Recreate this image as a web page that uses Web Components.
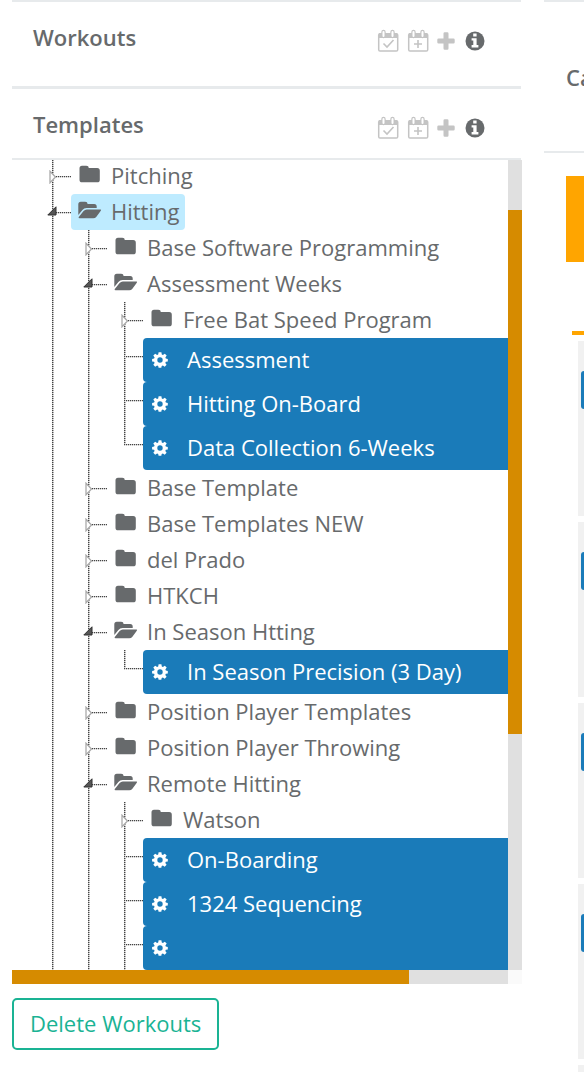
<!DOCTYPE html>
<html lang="en">
<head>
<meta charset="utf-8">
<meta name="viewport" content="width=device-width, initial-scale=1">
<title>Workout templates</title>
<style>
  html { background: #fff; }
  body { margin: 0; font-family: "Open Sans", "Noto Sans", sans-serif; font-size: 22px; line-height: 36px; color: #676a6c; overflow-x: hidden; }
</style>
</head>
<body>
<planner-page>
  <library-panel slot="library">
    <panel-header heading="Workouts"></panel-header>
    <panel-header heading="Templates" compact></panel-header>
    <scroll-frame>
      <tree-folder label="Pitching"></tree-folder>
      <tree-folder label="Hitting" open selected>
        <tree-folder label="Base Software Programming"></tree-folder>
        <tree-folder label="Assessment Weeks" open>
          <tree-folder label="Free Bat Speed Program"></tree-folder>
          <tree-workout label="Assessment"></tree-workout>
          <tree-workout label="Hitting On-Board"></tree-workout>
          <tree-workout label="Data Collection 6-Weeks" last></tree-workout>
        </tree-folder>
        <tree-folder label="Base Template"></tree-folder>
        <tree-folder label="Base Templates NEW"></tree-folder>
        <tree-folder label="del Prado"></tree-folder>
        <tree-folder label="HTKCH"></tree-folder>
        <tree-folder label="In Season Htting" open>
          <tree-workout label="In Season Precision (3 Day)" last></tree-workout>
        </tree-folder>
        <tree-folder label="Position Player Templates"></tree-folder>
        <tree-folder label="Position Player Throwing"></tree-folder>
        <tree-folder label="Remote Hitting" open>
          <tree-folder label="Watson"></tree-folder>
          <tree-workout label="On-Boarding"></tree-workout>
          <tree-workout label="1324 Sequencing"></tree-workout>
          <tree-workout label=""></tree-workout>
        </tree-folder>
      </tree-folder>
    </scroll-frame>
    <outline-button>Delete Workouts</outline-button>
  </library-panel>
  <calendar-panel slot="calendar" heading="Ca"></calendar-panel>
</planner-page>

<script>
const calendarFrame = `<path d="M2 4h18v5H2z" fill="currentColor"/><rect x="1.700" y="4.700" width="19" height="17.400" rx="1.300" fill="none" stroke="currentColor" stroke-width="1.500"/><path d="M6.500 3v4M15.500 3v4" stroke="currentColor" stroke-width="4.400" stroke-linecap="round"/><path d="M6.500 3v4M15.500 3v4" stroke="#fff" stroke-width="2" stroke-linecap="round"/>`;
const icons = {
  calendarCheck: `<svg width="22" height="24" viewBox="0 0 22 24">${calendarFrame}<path d="M6.500 14.500l3.500 3.500 6.500-7" fill="none" stroke="currentColor" stroke-width="1.600"/></svg>`,
  calendarPlus: `<svg width="22" height="24" viewBox="0 0 22 24">${calendarFrame}<path d="M7 15h8M11 11v8" fill="none" stroke="currentColor" stroke-width="1.600"/></svg>`,
  plus: `<svg width="18" height="18" viewBox="0 0 18 18"><path d="M6.500 1.500q0-1.200 1.200-1.200h2.600q1.200 0 1.200 1.200v5h5q1.200 0 1.200 1.200v2.600q0 1.200-1.200 1.200h-5v5q0 1.200-1.200 1.200H7.700q-1.200 0-1.200-1.200v-5h-5Q.3 11.500.3 10.300V7.700q0-1.200 1.200-1.200h5z" fill="currentColor"/></svg>`,
  info: `<svg width="20" height="20" viewBox="0 0 20 20"><circle cx="10" cy="10" r="9.500" fill="currentColor"/><path d="M8.200 2.600h3.400v3H8.200zM6.600 7.200h5v6.800h1.800v2.400H6.600V14h1.700V9.600H6.600z" fill="#fff"/></svg>`,
  folder: `<svg width="21" height="18" viewBox="0 0 21 18"><path d="M.5 3.200Q.5.700 3 .7h4.300q2.500 0 2.500 2.400h8.400q2.600 0 2.600 2.600v9q0 2.600-2.600 2.600H3.100Q.5 17.300.5 14.700z" fill="currentColor"/></svg>`,
  folderOpen: `<svg width="24" height="18" viewBox="0 0 24 18"><path d="M.3 14V3.200Q.3.700 2.800.7h4.300q2.500 0 2.500 2.400h6.600q2.500 0 2.500 2.500V7H8.500Q6 7 4.400 9z" fill="currentColor"/><path d="M.8 16l4.800-6Q7 8.500 8.800 8.500h13.600q1.200 0 .4 1.200l-4.400 6q-1.200 1.600-3.200 1.600H1.600q-1.600 0-.8-1.300z" fill="currentColor"/></svg>`,
  gear: `<svg width="16" height="16" viewBox="0 0 16 16"><path fill="currentColor" fill-rule="evenodd" d="M6.600.3h2.800l.4 2.200 1.100.5 1.900-1.300 1.900 1.900L13.400 5.500l.4 1.100 2 .3v2.500l-2 .4-.5 1.100 1.300 1.900-1.900 1.900-1.800-1.300-1.200.5-.4 1.900H6.600l-.4-1.900-1.100-.5-1.900 1.300-1.900-1.900 1.300-1.900-.5-1.100-2-.4V6.900l2-.3.5-1.100L1.300 3.600l1.900-1.900L5.100 3l1.100-.5zM8 5.300A2.700 2.700 0 1 0 8 10.700 2.700 2.700 0 1 0 8 5.300z"/></svg>`,
  closed: `<svg width="8" height="14" viewBox="0 0 8 14"><path d="M1 1.200v11.600L6.500 7z" fill="#fff" stroke="#aaa" stroke-width="1.300"/></svg>`,
  opened: `<svg width="10" height="10" viewBox="0 0 10 10"><path d="M9 .8v8.200H.8z" fill="#555" stroke="#333" stroke-width="1"/></svg>`
};

function define(name, render) {
  customElements.define(name, class extends HTMLElement {
    constructor() { super(); this.attachShadow({ mode: 'open' }); }
    connectedCallback() { this.shadowRoot.innerHTML = render(this); }
  });
}

const reset = `
  *, *::before, *::after { box-sizing: border-box; }
  svg { display: block; flex: none; }
  button { font: inherit; color: inherit; background: none; border: 0; margin: 0; padding: 0; cursor: pointer; }
`;

/* Dotted connector lines shared by every kind of tree node. */
const branch = `
  :host { display: block; position: relative; padding-left: 19px; }
  :host::before { content: ""; position: absolute; left: 0; top: 0; bottom: 0; width: 2px;
    background:
      repeating-linear-gradient(#444 0 1px, #ccc 1px 2px) 0 0 / 1px 100% no-repeat,
      repeating-linear-gradient(#aaa 0 1px, #eee 1px 2px); }
  :host([last])::before { bottom: auto; height: 19px; }
  .twig { position: absolute; left: 0; top: 18px; width: 19px; height: 2px;
    background:
      repeating-linear-gradient(90deg, #444 0 1px, #ccc 1px 2px) 0 0 / 100% 1px no-repeat,
      repeating-linear-gradient(90deg, #ccc 0 1px, #f4f4f4 1px 2px); }
`;

define('planner-page', () => `<style>${reset}
  :host { display: grid; grid-template-columns: minmax(0, 1fr) 40px; column-gap: 22px; padding-left: 12px; }
  </style><slot name="library"></slot><slot name="calendar"></slot>`);

define('library-panel', () => `<style>${reset}
  :host { display: block; }
  </style><slot></slot>`);

define('panel-header', el => `<style>${reset}
  :host { display: block; margin-right: 1px; border-top: 2px solid #e7eaec; }
  :host([compact]) { border-top-width: 3px; border-bottom: 2px solid #e7eaec; }
  header { display: flex; justify-content: space-between; height: 84px; padding: 17px 36px 0 21px; }
  :host([compact]) header { height: 69px; }
  h2 { margin: 0; font-size: 22px; line-height: 36px; font-weight: 600; }
  .tools { display: flex; align-items: center; height: 44px; color: #c4c4c4; }
  .tools button + button { margin-left: 8px; }
  .tools button.info { margin-left: 10px; color: #676a6c; }
  </style>
  <header><h2>${el.getAttribute('heading')}</h2>
  <div class="tools">
    <button aria-label="Schedule">${icons.calendarCheck}</button>
    <button aria-label="Add to calendar">${icons.calendarPlus}</button>
    <button aria-label="Add">${icons.plus}</button>
    <button class="info" aria-label="Information">${icons.info}</button>
  </div></header>`);

define('scroll-frame', () => `<style>${reset}
  :host { display: grid; grid-template-columns: minmax(0, 1fr) 14px; grid-template-rows: auto 14px; background: #fafafa; }
  .view { overflow: hidden; background: #fff; padding-left: 40px; }
  .list { margin-top: -2px; }
  .bar { display: flex; background: #e0e0e0; }
  .bar i { background: #d68b00; }
  .v { flex-direction: column; padding-top: 50px; }
  .v i { height: 69%; }
  .h i { width: 80%; }
  </style>
  <div class="view"><div class="list" role="tree"><slot></slot></div></div>
  <div class="bar v"><i></i></div>
  <div class="bar h"><i></i></div>`);

define('tree-folder', el => {
  const open = el.hasAttribute('open');
  return `<style>${reset}${branch}
  .toggle { position: absolute; left: -3px; top: 12px; }
  .toggle.open { left: -5px; }
  .row { display: flex; align-items: center; width: max-content; height: 36px; padding: 0 6px 0 7px; border-radius: 4px; }
  :host([selected]) .row { background: #beebff; }
  .icon { width: 33px; height: 22px; }
  .icon.shut { padding-left: 1px; }
  .name { padding-bottom: 2px; white-space: nowrap; }
  .children { margin-left: 17px; }
  </style>
  <span class="twig"></span>
  <button class="toggle ${open ? 'open' : ''}" aria-label="Toggle folder" aria-expanded="${open}">${open ? icons.opened : icons.closed}</button>
  <button class="row"><span class="icon ${open ? '' : 'shut'}">${open ? icons.folderOpen : icons.folder}</span><span class="name">${el.getAttribute('label')}</span></button>
  <div class="children" role="group"><slot></slot></div>`;
});

define('tree-workout', el => `<style>${reset}${branch}
  .row { display: flex; align-items: center; width: 100%; height: 44px; padding-left: 9px; gap: 19px;
    border-radius: 4px 0 0 4px; background: #1a7bb9; color: #fff; font-weight: 500; white-space: nowrap; }
  .name { padding-bottom: 2px; }
  </style>
  <span class="twig"></span>
  <button class="row" aria-label="${el.getAttribute('label') || 'Untitled workout'}">${icons.gear}<span class="name">${el.getAttribute('label')}</span></button>`);

define('outline-button', () => `<style>${reset}
  :host { display: block; margin-top: 14px; }
  button { height: 52px; padding: 0 16px 2px; border: 2px solid #1ab394; border-radius: 5px; color: #1ab394; background: #fff; }
  </style><button><slot></slot></button>`);

define('calendar-panel', el => `<style>${reset}
  :host { display: block; min-width: 0; overflow: hidden; border-top: 2px solid #e7eaec; }
  header { height: 151px; padding: 57px 0 0 22px; border-bottom: 2px solid #e7eaec; }
  h2 { margin: 0; font-size: 22px; line-height: 36px; font-weight: 600; white-space: nowrap; }
  .banner { height: 86px; margin: 23px 0 0 22px; background: #ffa500; }
  .rule { height: 4px; margin: 69px 0 6px 28px; background: #ffa500; }
  .days { display: grid; gap: 6px; margin-left: 34px; height: 731px; overflow: hidden; grid-auto-rows: 175px; }
  .day { padding: 30px 0 0 3px; background: #f1f1f1; }
  .day i { display: block; height: 38px; border-radius: 5px 0 0 5px; background: #1a7bb9; }
  </style>
  <header><h2>${el.getAttribute('heading')}</h2></header>
  <div class="banner"></div><div class="rule"></div>
  <div class="days">${'<div class="day"><i></i></div>'.repeat(5)}</div>`);
</script>
</body>
</html>
